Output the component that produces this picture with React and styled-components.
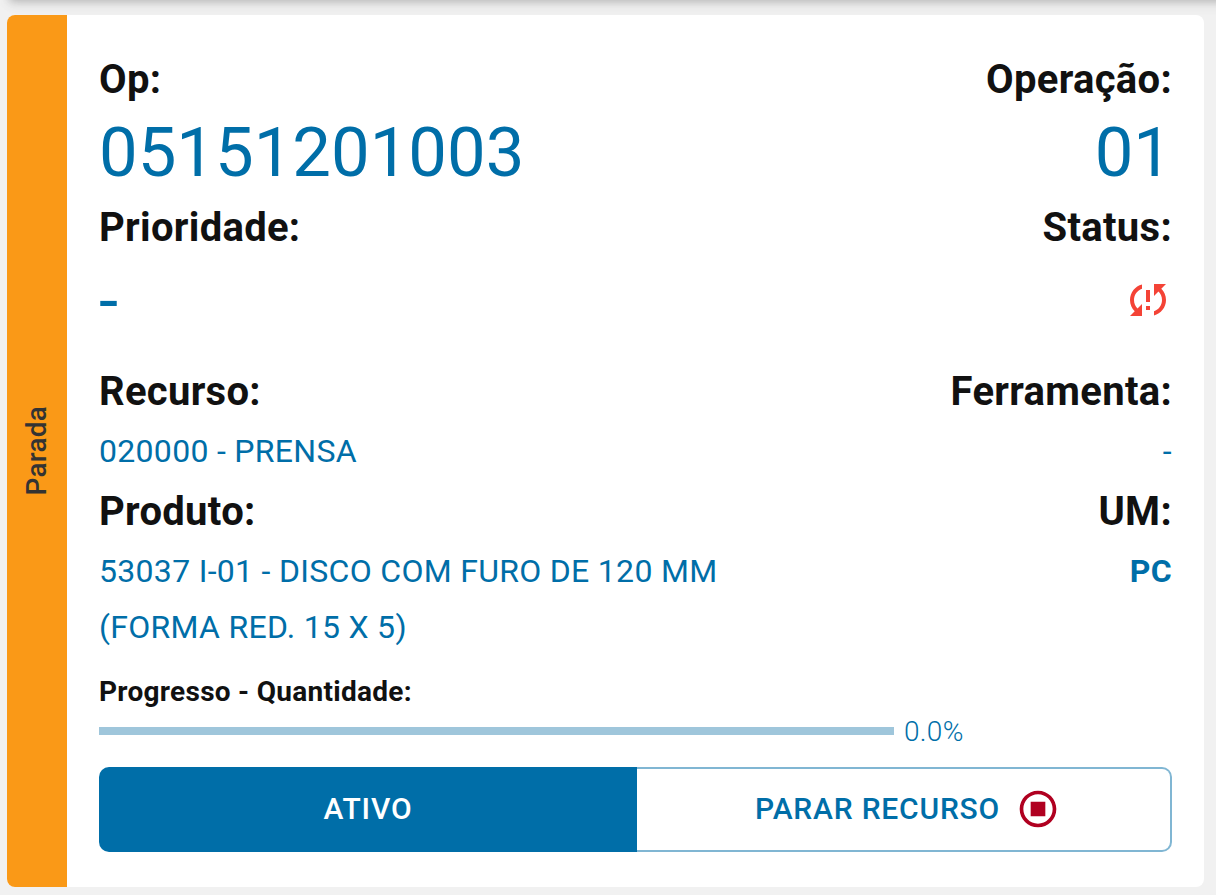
import React from "react";
import styled, { createGlobalStyle } from "styled-components";

const App = () => {
  return (
    <React.Fragment>
      <GlobalStyle />
      <Page>
        <TopEdge>
          <TopBar />
        </TopEdge>
        <Card>
          <Side>
            <SideText>Parada</SideText>
          </Side>
          <Body>
            <Row $h={58} $pt={6}>
              <Label>Op:</Label>
              <Label>Operação:</Label>
            </Row>
            <Row $h={96} $pt={1}>
              <Big>05151201003</Big>
              <Big>01</Big>
            </Row>
            <Row $h={58}>
              <Label>Prioridade:</Label>
              <Label>Status:</Label>
            </Row>
            <Row $h={106}>
              <Dash>-</Dash>
              <SyncIcon />
            </Row>
            <Row $h={60}>
              <Label>Recurso:</Label>
              <Label>Ferramenta:</Label>
            </Row>
            <Row $h={60} $pt={1}>
              <Value>020000 - PRENSA</Value>
              <Value>-</Value>
            </Row>
            <Row $h={60}>
              <Label>Produto:</Label>
              <Label>UM:</Label>
            </Row>
            <Row $h={130} $pt={1}>
              <Value>
                53037 I-01 - DISCO COM FURO DE 120 MM
                <br />
                (FORMA RED. 15 X 5)
              </Value>
              <Value $bold>PC</Value>
            </Row>
            <Progress />
            <Buttons>
              <ActiveButton>ATIVO</ActiveButton>
              <StopButton>
                <StopText>PARAR RECURSO</StopText>
                <StopIcon />
              </StopButton>
            </Buttons>
          </Body>
        </Card>
      </Page>
    </React.Fragment>
  );
};

const Progress = () => (
  <ProgressBox>
    <ProgressLabel>Progresso - Quantidade:</ProgressLabel>
    <ProgressLine>
      <Bar />
      <Percent>0.0%</Percent>
    </ProgressLine>
  </ProgressBox>
);

const SyncIcon = () => (
  <StatusSvg viewBox="0 0 24 24" fill="#f44336">
    <path d="M3 12c0 2.21.91 4.2 2.36 5.64L3 20h6v-6l-2.24 2.24C5.68 15.15 5 13.66 5 12c0-2.61 1.67-4.83 4-5.65V4.26C5.55 5.15 3 8.27 3 12zm8 5h2v-2h-2v2zM21 4h-6v6l2.24-2.24C18.32 8.85 19 10.34 19 12c0 2.61-1.67 4.83-4 5.65v2.09c3.45-.89 6-4.01 6-7.74 0-2.21-.91-4.2-2.36-5.64L21 4zm-10 9h2V7h-2v6z" />
  </StatusSvg>
);

const StopIcon = () => (
  <StopSvg viewBox="0 0 24 24" fill="#b00020">
    <path d="M16 8v8H8V8h8zm-4-6C6.48 2 2 6.48 2 12s4.48 10 10 10 10-4.480 10-10S17.520 2 12 2zm0 18c-4.420 0-8-3.580-8-8s3.580-8 8-8 8 3.580 8 8-3.580 8-8 8z" />
  </StopSvg>
);

const GlobalStyle = createGlobalStyle`
  * {
    box-sizing: border-box;
  }
  body {
    margin: 0;
    background: #f1f1f1;
    font-family: Roboto, sans-serif;
  }
`;
const Page = styled.div`
  height: 895px;
  overflow: hidden;
  padding: 0 12px 0 7px;
`;
const TopEdge = styled.div`
  height: 15px;
  margin: 0 -12px 0 -7px;
  overflow: hidden;
`;
const TopBar = styled.div`
  height: 40px;
  margin: -42px -20px 0 8px;
  box-shadow: 0 4px 8px -2px rgba(0, 0, 0, 0.2),
    0 8px 10px rgba(0, 0, 0, 0.06), 0 2px 20px rgba(0, 0, 0, 0.06);
`;
const Card = styled.div`
  display: flex;
  height: 872px;
  border-radius: 8px;
  overflow: hidden;
  background: #fff;
`;
const Side = styled.div`
  display: flex;
  align-items: center;
  justify-content: center;
  width: 60px;
  padding-right: 2px;
  background: #fa9917;
`;
const SideText = styled.span`
  writing-mode: vertical-rl;
  transform: rotate(180deg);
  font-size: 28px;
  font-weight: 500;
  letter-spacing: 0.2px;
  color: #333;
`;
const Body = styled.div`
  flex: 1;
  padding: 29px 32px 0;
`;
const Row = styled.div`
  display: flex;
  justify-content: space-between;
  height: ${(p) => p.$h}px;
  padding-top: ${(p) => p.$pt || 0}px;
`;
const Label = styled.span`
  font-size: 40px;
  font-weight: 700;
  line-height: 60px;
  letter-spacing: 0.3px;
  color: #111;
`;
const Big = styled.span`
  font-size: 68.8px;
  line-height: 100px;
  color: #006ea8;
`;
const Dash = styled.span`
  font-size: 69px;
  line-height: 90px;
  color: #006ea8;
`;
const Value = styled.span`
  font-size: 32px;
  font-weight: ${(p) => (p.$bold ? 700 : 400)};
  line-height: 56px;
  letter-spacing: 0.3px;
  color: #006ea8;
`;
const StatusSvg = styled.svg`
  width: 48px;
  height: 48px;
  margin-top: 20px;
`;
const ProgressBox = styled.div`
  height: 95px;
`;
const ProgressLabel = styled.div`
  font-size: 28px;
  font-weight: 700;
  line-height: 40px;
  letter-spacing: 0.28px;
  color: #111;
`;
const ProgressLine = styled.div`
  display: flex;
  align-items: center;
  height: 38px;
`;
const Bar = styled.div`
  width: 795px;
  height: 8px;
  margin-right: 10px;
  background: #9fc6db;
`;
const Percent = styled.span`
  font-size: 28px;
  font-weight: 300;
  letter-spacing: 0.3px;
  color: #006ea8;
`;
const Buttons = styled.div`
  display: flex;
  height: 85px;
`;
const ActiveButton = styled.button`
  width: 538px;
  padding: 0 0 2px;
  border: 0;
  border-radius: 10px 0 0 10px;
  background: #006ea8;
  color: #fff;
  font: 500 30px Roboto, sans-serif;
  letter-spacing: 0.85px;
`;
const StopButton = styled.button`
  display: flex;
  flex: 1;
  align-items: center;
  justify-content: center;
  padding: 0 0 1px 8px;
  border: 2px solid #80b6d3;
  border-left: 0;
  border-radius: 0 10px 10px 0;
  background: #fff;
  color: #006ea8;
  font: 500 30px Roboto, sans-serif;
  letter-spacing: 0.8px;
`;
const StopText = styled.span`
  padding-bottom: 2px;
`;
const StopSvg = styled.svg`
  width: 44px;
  height: 44px;
  margin-left: 16px;
`;

export default App;
